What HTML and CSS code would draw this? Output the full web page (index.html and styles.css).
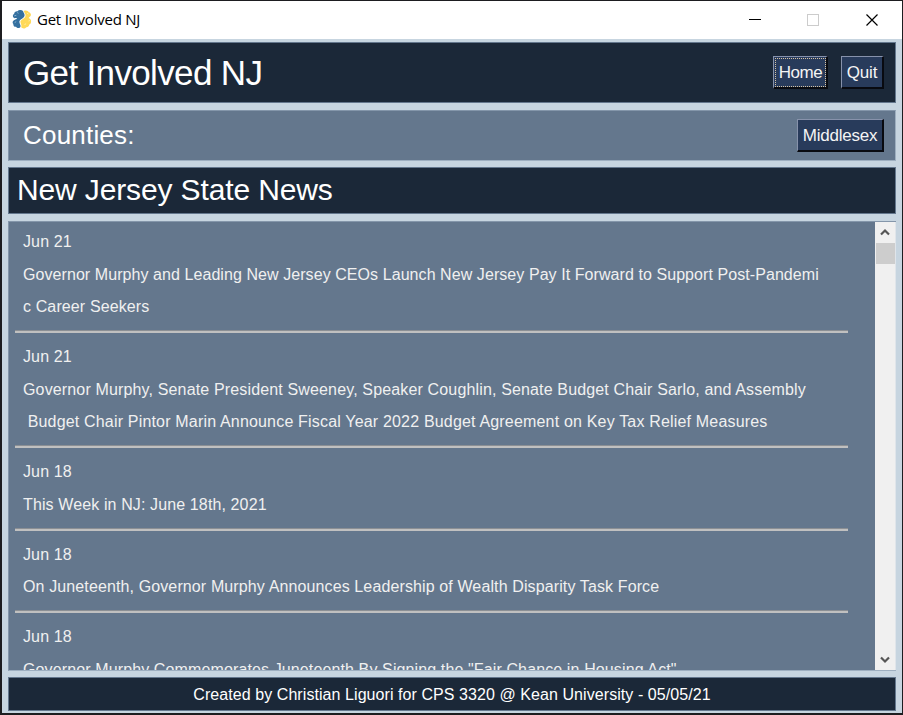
FILE: index.html
```html
<!DOCTYPE html>
<html lang="en">
<head>
<meta charset="utf-8">
<title>Get Involved NJ</title>
<link rel="stylesheet" href="styles.css">
</head>
<body>
<div class="window">
  <header class="titlebar">
    <svg class="logo" width="20" height="20" viewBox="0 0 20 20">
      <path d="M11.700.9C14 -.2 16.200.6 16.700 2.300C18.600 2.700 19.500 4.500 18.600 6C18 7 16.800 7.200 16.700 8.200C18.200 8.600 19.400 9.800 19 11.600C19.200 13 18.500 14.200 17.200 14.600C17 16.500 15.700 17.400 14.300 17.200C13 19 10 18.800 9.200 17C10 15 8.400 13.500 8.400 11.600C8.600 9.300 13.500 8.600 13.600 5.400C13.600 3.500 12 2.500 11.700.9Z" fill="#ffd958"/>
      <path d="M11 .9C9.500-.3 6.800-.1 5.600 1.200C3.700.9 2.200 2.200 2.200 3.800C.6 4.600.4 6.800 1.800 7.800C3 8.700 4.400 8 5.200 8.600C5 9.600 3 9.300 2 10.300C.5 11 .2 13 1.300 14C1.200 15.800 2.400 17 4 16.800C5 18.500 8 18.600 8.500 16.500C8.900 14.800 7.300 13.500 7.400 11.500C7.500 9.100 12.500 8.500 12.600 5.200C12.600 3.300 11.200 2.500 11 .9Z" fill="#35709f"/>
      <path d="M2.300 5.800l2-.5M5.200 2.500l1.300.8M2.700 12.500l1.500-.8" stroke="#9fc0d9" stroke-width=".8"/>
      <path d="M15 3.200l1.500.8M16.500 11l1.400-.5M12.500 14.500l1.500-.7" stroke="#fff3b5" stroke-width=".8"/>
    </svg>
    <span class="caption">Get Involved NJ</span>
    <svg class="controls" width="130" height="14" viewBox="0 0 130 14" fill="none" shape-rendering="crispEdges">
      <path d="M0 6.500h12" stroke="#000"/>
      <rect x="58.500" y="1.500" width="11" height="11" stroke="#ccc"/>
      <path d="M117.500 1.500l11 11M128.500 1.500l-11 11" stroke="#000" shape-rendering="auto" stroke-width="1.200"/>
    </svg>
  </header>
  <main class="content">
    <section class="panel dark banner">
      <h1 class="t-app">Get Involved NJ</h1>
      <button class="btn home">Home</button>
      <button class="btn quit">Quit</button>
    </section>
    <section class="panel counties">
      <h2 class="t-counties">Counties:</h2>
      <button class="btn middlesex">Middlesex</button>
    </section>
    <section class="panel dark heading"><h2 class="t-news">New Jersey State News</h2></section>
    <section class="panel feed">
      <div class="items">
        <article><p>Jun 21</p><p class="snug">Governor Murphy and Leading New Jersey CEOs Launch New Jersey Pay It Forward to Support Post-Pandemi</p><p>c Career Seekers</p></article>
        <article><p>Jun 21</p><p class="wide">Governor Murphy, Senate President Sweeney, Speaker Coughlin, Senate Budget Chair Sarlo, and Assembly</p><p class="wider"> Budget Chair Pintor Marin Announce Fiscal Year 2022 Budget Agreement on Key Tax Relief Measures</p></article>
        <article><p>Jun 18</p><p>This Week in NJ: June 18th, 2021</p></article>
        <article><p>Jun 18</p><p>On Juneteenth, Governor Murphy Announces Leadership of Wealth Disparity Task Force</p></article>
        <article><p>Jun 18</p><p>Governor Murphy Commemorates Juneteenth By Signing the "Fair Chance in Housing Act"</p></article>
      </div>
      <div class="scrollbar">
        <svg width="10" height="8" viewBox="0 0 10 8"><path d="M1 6.500L5 2.500L9 6.500" fill="none" stroke="#555" stroke-width="2.200"/></svg>
        <div class="thumb"></div>
        <svg class="down" width="10" height="8" viewBox="0 0 10 8"><path d="M1 1.500L5 5.500L9 1.500" fill="none" stroke="#555" stroke-width="2.200"/></svg>
      </div>
    </section>
    <footer class="panel dark foot"><span class="t-foot">Created by Christian Liguori for CPS 3320 @ Kean University - 05/05/21</span></footer>
  </main>
</div>
</body>
</html>
```
FILE: styles.css
```css
* { box-sizing: border-box; }
body { margin: 0; overflow: hidden; font-family: "Liberation Sans", Arial, sans-serif; }
h1, h2, p { margin: 0; font-weight: 400; }
.window { width: 903px; height: 715px; border: solid #1d1d20; border-width: 1px 1px 2px 2px; background: #c7d5e0; display: flex; flex-direction: column; }
.titlebar { height: 38px; flex: none; background: #fff; display: flex; align-items: center; padding: 0 23px 0 10px; }
.logo { margin-right: 5px; }
.caption { font: 15px/20px "Open Sans", sans-serif; letter-spacing: -0.23px; color: #000; padding-bottom: 2px; }
.controls { margin-left: auto; }
.content { flex: 1; padding: 3px 6px 2px; display: flex; flex-direction: column; gap: 7px; }
.panel { background: #64778d; border: 1px solid #8496aa; border-right-color: #9eafc0; border-bottom-color: #9eafc0; display: flex; align-items: center; color: #fff; flex: none; }
.dark { background: #1b2838; border-color: #64778d; }
.banner { height: 61px; padding: 0 11px 0 14px; }
.counties { height: 51px; padding: 0 11px 0 14px; margin-bottom: -1px; }
.heading { height: 47px; padding: 0 0 2px 8px; }
.t-app { font-size: 35px; letter-spacing: -0.65px; margin-right: auto; }
.t-counties { font-size: 26px; letter-spacing: 0.2px; margin-right: auto; }
.t-news { font-size: 30px; letter-spacing: -0.13px; }
.btn { height: 33px; padding: 1px 0 0; border: solid; border-width: 1px 2px 2px 1px; border-color: #8792ab #080a10 #080a10 #8792ab; background: #283b5b; color: #f4f4f4; font: 17px "Liberation Sans", sans-serif; }
.home { width: 55px; margin-right: 13px; padding-left: 1px; letter-spacing: -0.45px; outline: 1px dotted #d7c4a4; outline-offset: -3px; }
.quit { width: 43px; letter-spacing: -0.2px; }
.middlesex { width: 87px; letter-spacing: -0.25px; }
.feed { height: 450px; margin-bottom: -1px; align-items: stretch; overflow: hidden; border-right: 0; }
.items { flex: 1; padding: 4.300px 27px 0 6px; overflow: hidden; font-size: 16px; letter-spacing: 0.12px; color: #f0f0f0; }
article { padding: 0 0 7.200px 8px; border-bottom: 2px solid #c0c0c0; box-shadow: inset 0 -1px #8b8f94; margin-bottom: 8.150px; }
article p { height: 32.550px; line-height: 32.550px; white-space: pre; }
.snug { letter-spacing: 0.07px; }
.wide { letter-spacing: 0.15px; }
.wider { letter-spacing: 0.18px; }
.scrollbar { width: 21px; background: #f0f0f0; display: flex; flex-direction: column; align-items: center; padding: 6px 0; border-right: 1px solid #e0e5ea; }
.thumb { width: 19px; height: 21px; background: #cdcdcd; margin-top: 7px; flex: none; }
.down { margin-top: auto; }
.foot { height: 34px; padding-top: 1px; justify-content: center; font-size: 16px; letter-spacing: 0.07px; }
```
